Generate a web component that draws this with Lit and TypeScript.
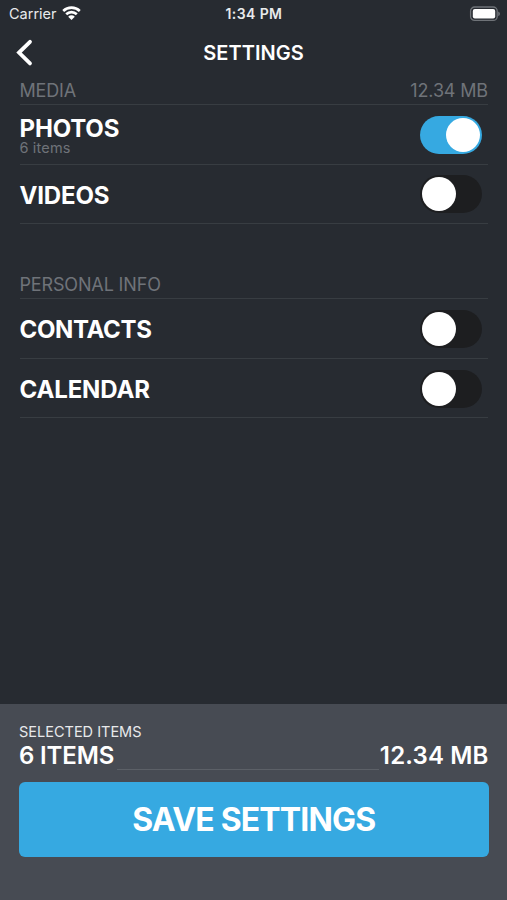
import { LitElement, html, css, nothing } from "lit";
import { customElement, property, state } from "lit/decorators.js";
import { classMap } from "lit/directives/class-map.js";

interface Item {
  id: string;
  label: string;
  detail?: string;
  on: boolean;
}

interface Group {
  title: string;
  size?: string;
  items: Item[];
}

@customElement("toggle-switch")
class ToggleSwitch extends LitElement {
  @property({ type: Boolean }) on = false;

  static styles = css`
    :host { display: block; }
    .track {
      display: flex;
      align-items: center;
      box-sizing: border-box;
      width: 62.5px;
      height: 38px;
      padding: 0 2px;
      border-radius: 19px;
      background: #1d1e20;
    }
    .track.on { justify-content: flex-end; background: #36a9e1; }
    .knob { width: 34px; height: 34px; border-radius: 50%; background: #fff; }
  `;

  render() {
    return html`<div class=${classMap({ track: true, on: this.on })}><div class="knob"></div></div>`;
  }
}

@customElement("status-bar")
class StatusBar extends LitElement {
  static styles = css`
    :host {
      display: grid;
      grid-template-columns: 1fr auto 1fr;
      align-items: center;
      height: 27px;
      padding: 0 7px 0 9px;
      font-size: 14.5px;
      line-height: 27px;
      color: #e8eaec;
    }
    .carrier { display: flex; align-items: center; gap: 5px; }
    .time { font-weight: 600; font-size: 14px; letter-spacing: 0.4px; margin-right: 1px; }
    .battery { justify-self: end; }
    .wifi { margin-top: -1px; }
    svg { display: block; }
  `;

  render() {
    return html`
      <div class="carrier">
        <span>Carrier</span>
        <svg class="wifi" width="19" height="14" viewBox="0 0 19 14" fill="none" stroke="#fff" stroke-width="2.6">
          <path d="M1.2 5 A12 12 0 0 1 17.8 5" />
          <path d="M4.2 8.3 A7.6 7.6 0 0 1 14.8 8.3" />
          <path d="M9.5 14 L6.2 10.7 A4.6 4.6 0 0 1 12.8 10.7 Z" fill="#fff" stroke="none" />
        </svg>
      </div>
      <div class="time">1:34 PM</div>
      <svg class="battery" width="31" height="16" viewBox="0 0 31 16">
        <rect x="1.6" y="1" width="26.6" height="13.4" rx="4" fill="none" stroke="#6f7378" stroke-width="1.3" />
        <rect x="3.8" y="3" width="22.4" height="9.4" rx="2" fill="#fff" />
        <path d="M29.2 5.4 Q31 6.2 31 7.8 Q31 9.4 29.2 10.2 Z" fill="#6f7378" />
      </svg>
    `;
  }
}

@customElement("app-root")
class AppRoot extends LitElement {
  @state() private groups: Group[] = [
    {
      title: "MEDIA",
      size: "12.34 MB",
      items: [
        { id: "photos", label: "PHOTOS", detail: "6 items", on: true },
        { id: "videos", label: "VIDEOS", on: false },
      ],
    },
    {
      title: "PERSONAL INFO",
      items: [
        { id: "contacts", label: "CONTACTS", on: false },
        { id: "calendar", label: "CALENDAR", on: false },
      ],
    },
  ];

  static styles = css`
    :host {
      display: flex;
      flex-direction: column;
      height: 900px;
      background: #272b31;
      color: #fff;
      font-family: Inter, "Liberation Sans", sans-serif;
    }
    .nav {
      display: grid;
      grid-template-columns: 1fr auto 1fr;
      align-items: center;
      height: 51px;
      padding: 0 15px;
    }
    .nav svg { display: block; }
    .title { padding-top: 1px; font-size: 20px; font-weight: 600; line-height: 50px; letter-spacing: 0.05px; }
    .group { padding: 0 19px 0 19.5px; margin-bottom: 48px; }
    .head {
      display: flex;
      justify-content: space-between;
      height: 26px;
      line-height: 25px;
      font-size: 18px;
      letter-spacing: -0.15px;
      color: #6f7379;
      border-bottom: 1px solid #383d42;
    }
    .row {
      display: flex;
      align-items: center;
      justify-content: space-between;
      box-sizing: border-box;
      height: 59.6px;
      padding: 1.2px 6px 0 0;
      border-bottom: 1px solid #383d42;
    }
    .text { padding-top: 2px; }
    .name { font-size: 24px; font-weight: 650; line-height: 24px; letter-spacing: -0.15px; }
    .name.photos { padding-top: 1px; line-height: 23px; }
    .name.videos { padding-top: 1px; }
    .name.contacts { letter-spacing: -0.35px; }
    .name.calendar { letter-spacing: -0.15px; }
    .detail { font-size: 14.5px; line-height: 15px; letter-spacing: 0.15px; color: #6f7379; }
    .footer {
      flex: none;
      margin-top: auto;
      box-sizing: border-box;
      height: 196px;
      padding: 19px 18.5px 0 19px;
      background: #474b53;
    }
    .caption { font-size: 14.5px; line-height: 18px; color: #e8e9eb; }
    .totals {
      display: flex;
      height: 29px;
      font-size: 24px;
      font-weight: 600;
      line-height: 29px;
      letter-spacing: -0.15px;
    }
    .sum { letter-spacing: 0.15px; }
    .leader { flex: 1; height: 28px; margin: 0 1px 0 3px; border-bottom: 1px solid #5c6067; }
    .save {
      display: block;
      width: 100%;
      height: 75px;
      margin-top: 12px;
      padding: 0;
      border: 0;
      border-radius: 6px;
      background: #36a9e1;
      color: #fff;
      font: 650 32px/75px Inter, "Liberation Sans", sans-serif;
      letter-spacing: -0.85px;
    }
  `;

  private toggle(target: Item) {
    this.groups = this.groups.map((g) => ({
      ...g,
      items: g.items.map((i) => (i.id === target.id ? { ...i, on: !i.on } : i)),
    }));
  }

  render() {
    return html`
      <status-bar></status-bar>
      <div class="nav">
        <svg width="18" height="28" viewBox="0 0 18 28" fill="none" stroke="#fff" stroke-width="3.8" stroke-linecap="round">
          <path d="M15 2.8 L4 13.6 L15 24.4" />
        </svg>
        <div class="title">SETTINGS</div>
      </div>
      ${this.groups.map(
        (g) => html`
          <div class="group">
            <div class="head"><span>${g.title}</span><span>${g.size ?? nothing}</span></div>
            ${g.items.map(
              (i) => html`
                <div class="row">
                  <div class="text">
                    <div class="name ${i.id}">${i.label}</div>
                    ${i.detail ? html`<div class="detail">${i.detail}</div>` : nothing}
                  </div>
                  <toggle-switch .on=${i.on} @click=${() => this.toggle(i)}></toggle-switch>
                </div>
              `
            )}
          </div>
        `
      )}
      <div class="footer">
        <div class="caption">SELECTED ITEMS</div>
        <div class="totals"><span>6 ITEMS</span><div class="leader"></div><span class="sum">12.34 MB</span></div>
        <button class="save">SAVE SETTINGS</button>
      </div>
    `;
  }
}
